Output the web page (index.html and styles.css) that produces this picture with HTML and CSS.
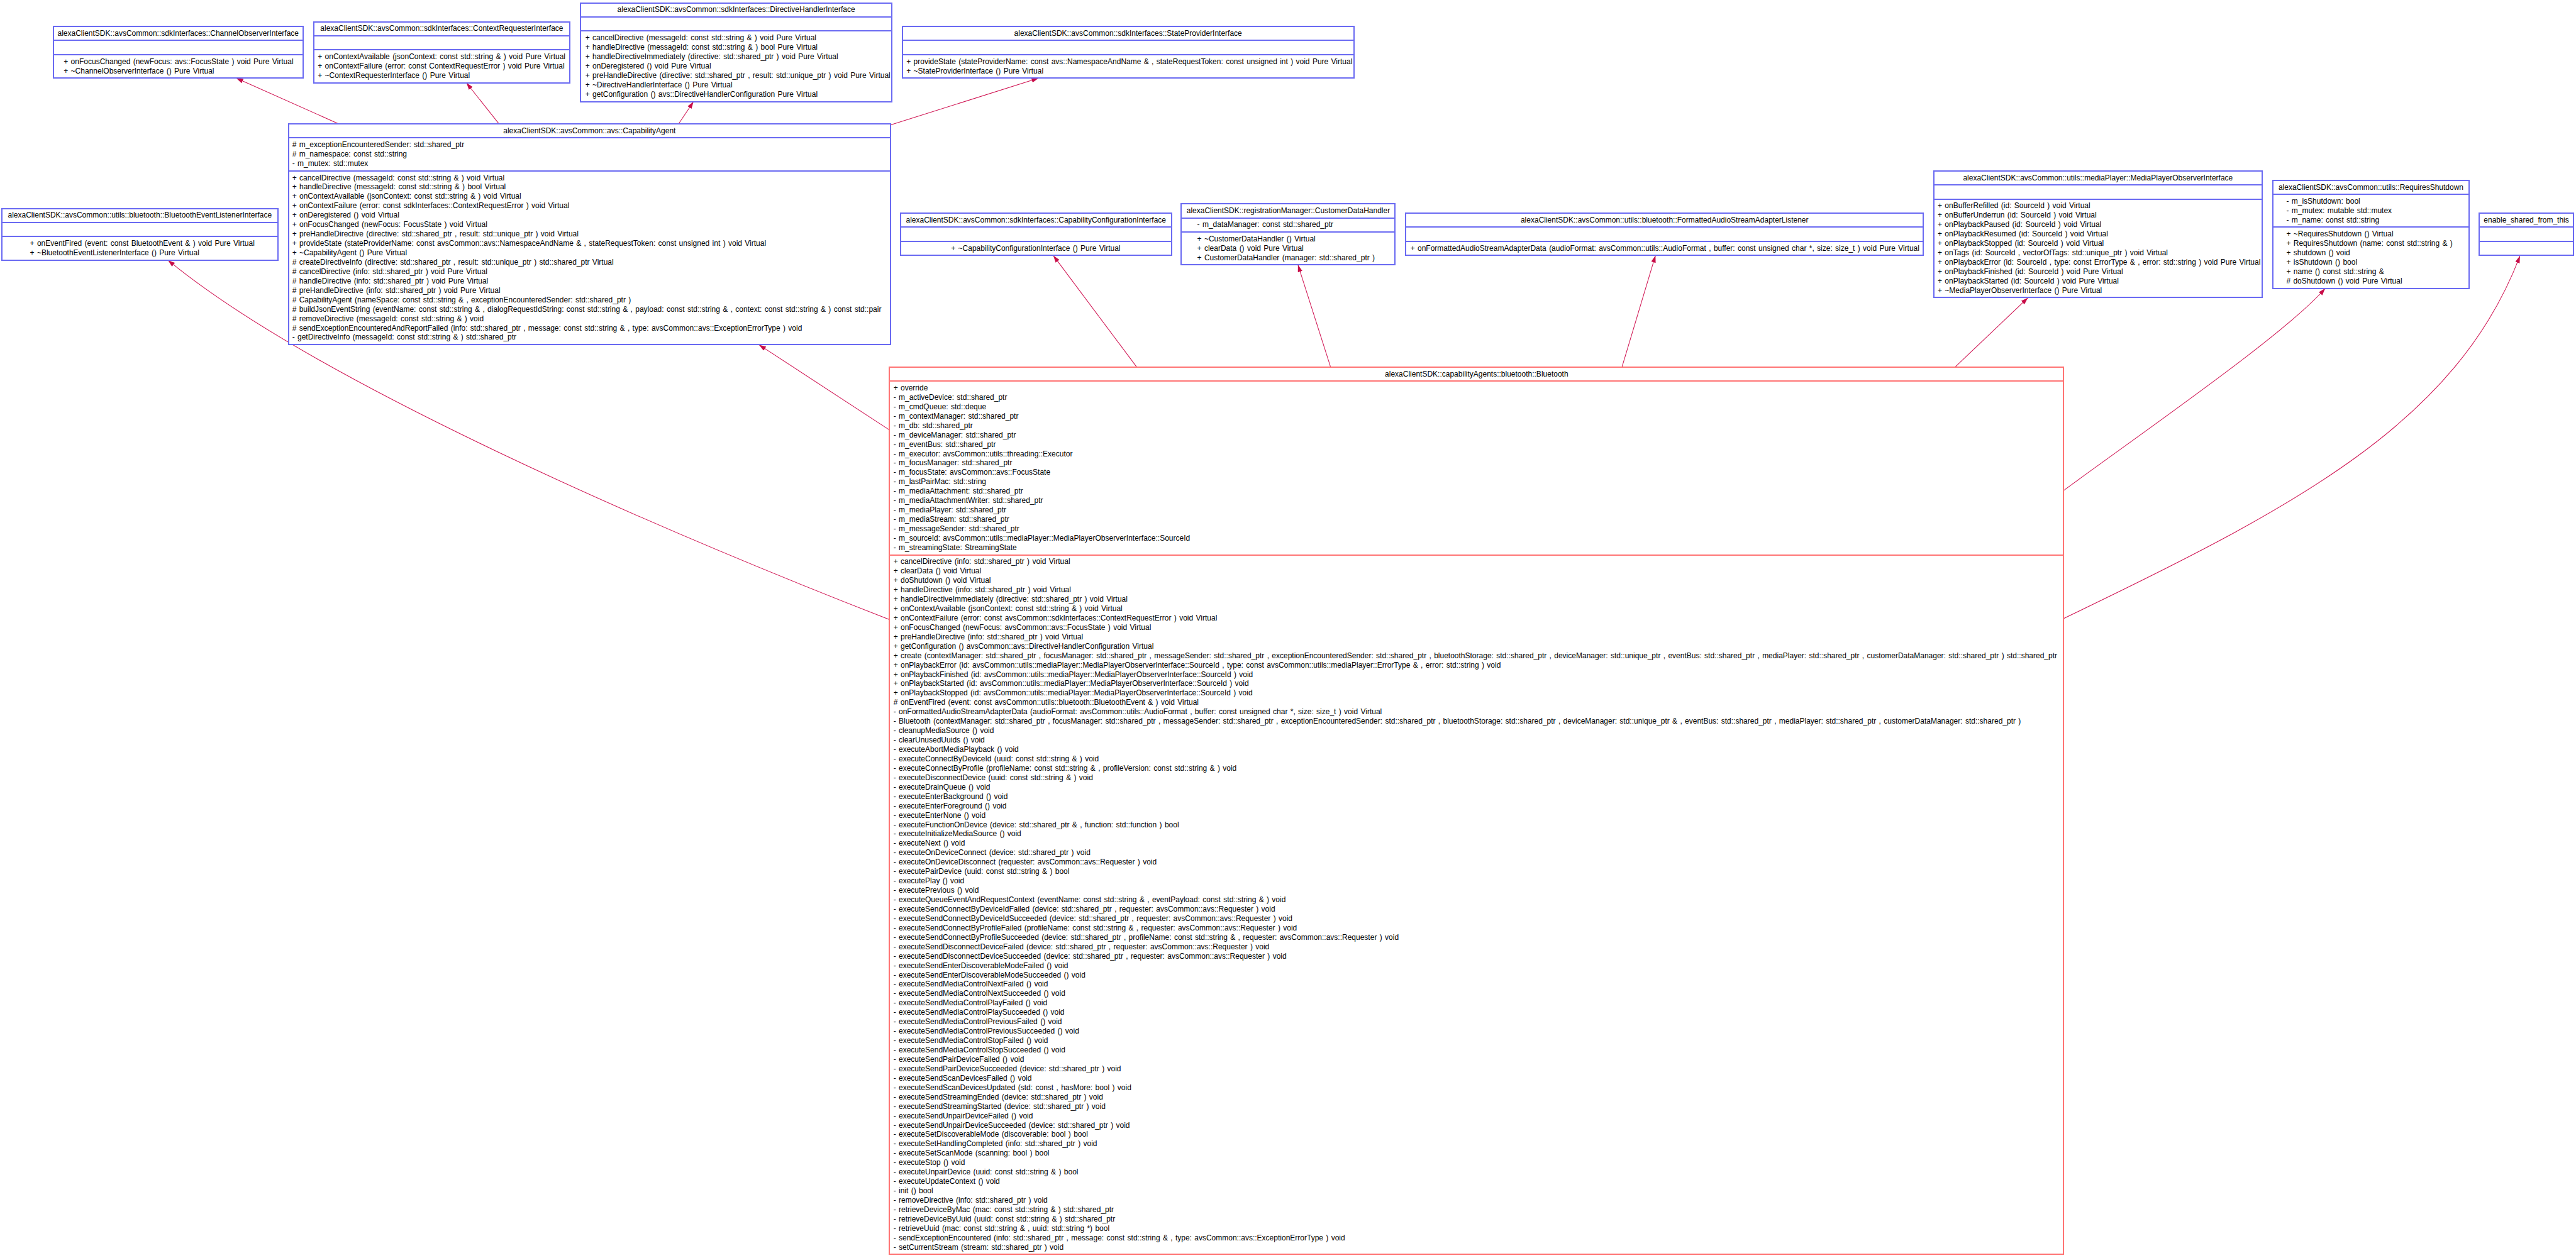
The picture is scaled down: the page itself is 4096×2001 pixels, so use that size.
FILE: index.html
```html
<!DOCTYPE html>
<html lang="en">
<head>
<meta charset="utf-8">
<title>alexaClientSDK::capabilityAgents::bluetooth::Bluetooth class diagram</title>
<link rel="stylesheet" href="styles.css">
</head>
<body>
<main class="canvas">
<svg class="edges" viewBox="0 0 4385 2142" aria-hidden="true">
<defs><marker id="head" markerUnits="userSpaceOnUse" markerWidth="13" markerHeight="9" refX="12" refY="4.5" orient="auto"><path class="head" d="M0 .5L12 4.5L0 8.5z"/></marker></defs>
<path class="edge" d="M577 211L402 133"/>
<path class="edge" d="M849.5 211L794 141"/>
<path class="edge" d="M1155 211L1180.5 173"/>
<path class="edge" d="M1515 213L1768 133"/>
<path class="edge" d="M1514 1055C1114 899 536 649 286 443"/>
<path class="edge" d="M1514 732L1292 587"/>
<path class="edge" d="M1935 625L1793 435"/>
<path class="edge" d="M2265 625L2209.5 451"/>
<path class="edge" d="M2761 625L2818 435"/>
<path class="edge" d="M3328 625L3452 507"/>
<path class="edge" d="M3513 835C3663 725 3892 567 3958 491"/>
<path class="edge" d="M3513 1053C3913 861 4182 718 4289.6 435.7"/>
</svg>

<section class="node n-channel">
<div class="sec title">alexaClientSDK::avsCommon::sdkInterfaces::ChannelObserverInterface</div>
<div class="sec"></div>
<div class="sec"><p>+ onFocusChanged (newFocus: avs::FocusState ) void Pure Virtual</p><p>+ ~ChannelObserverInterface () Pure Virtual</p></div>
</section>

<section class="node n-context">
<div class="sec title">alexaClientSDK::avsCommon::sdkInterfaces::ContextRequesterInterface</div>
<div class="sec"></div>
<div class="sec"><p>+ onContextAvailable (jsonContext: const std::string &amp; ) void Pure Virtual</p><p>+ onContextFailure (error: const ContextRequestError ) void Pure Virtual</p><p>+ ~ContextRequesterInterface () Pure Virtual</p></div>
</section>

<section class="node n-directive">
<div class="sec title">alexaClientSDK::avsCommon::sdkInterfaces::DirectiveHandlerInterface</div>
<div class="sec"></div>
<div class="sec"><p>+ cancelDirective (messageId: const std::string &amp; ) void Pure Virtual</p><p>+ handleDirective (messageId: const std::string &amp; ) bool Pure Virtual</p><p>+ handleDirectiveImmediately (directive: std::shared_ptr ) void Pure Virtual</p><p>+ onDeregistered () void Pure Virtual</p><p>+ preHandleDirective (directive: std::shared_ptr , result: std::unique_ptr ) void Pure Virtual</p><p>+ ~DirectiveHandlerInterface () Pure Virtual</p><p>+ getConfiguration () avs::DirectiveHandlerConfiguration Pure Virtual</p></div>
</section>

<section class="node n-state">
<div class="sec title">alexaClientSDK::avsCommon::sdkInterfaces::StateProviderInterface</div>
<div class="sec"></div>
<div class="sec"><p>+ provideState (stateProviderName: const avs::NamespaceAndName &amp; , stateRequestToken: const unsigned int ) void Pure Virtual</p><p>+ ~StateProviderInterface () Pure Virtual</p></div>
</section>

<section class="node n-listener">
<div class="sec title">alexaClientSDK::avsCommon::utils::bluetooth::BluetoothEventListenerInterface</div>
<div class="sec"></div>
<div class="sec"><p>+ onEventFired (event: const BluetoothEvent &amp; ) void Pure Virtual</p><p>+ ~BluetoothEventListenerInterface () Pure Virtual</p></div>
</section>

<section class="node n-agent">
<div class="sec title">alexaClientSDK::avsCommon::avs::CapabilityAgent</div>
<div class="sec"><p># m_exceptionEncounteredSender: std::shared_ptr</p><p># m_namespace: const std::string</p><p>- m_mutex: std::mutex</p></div>
<div class="sec"><p>+ cancelDirective (messageId: const std::string &amp; ) void Virtual</p><p>+ handleDirective (messageId: const std::string &amp; ) bool Virtual</p><p>+ onContextAvailable (jsonContext: const std::string &amp; ) void Virtual</p><p>+ onContextFailure (error: const sdkInterfaces::ContextRequestError ) void Virtual</p><p>+ onDeregistered () void Virtual</p><p>+ onFocusChanged (newFocus: FocusState ) void Virtual</p><p>+ preHandleDirective (directive: std::shared_ptr , result: std::unique_ptr ) void Virtual</p><p>+ provideState (stateProviderName: const avsCommon::avs::NamespaceAndName &amp; , stateRequestToken: const unsigned int ) void Virtual</p><p>+ ~CapabilityAgent () Pure Virtual</p><p># createDirectiveInfo (directive: std::shared_ptr , result: std::unique_ptr ) std::shared_ptr Virtual</p><p># cancelDirective (info: std::shared_ptr ) void Pure Virtual</p><p># handleDirective (info: std::shared_ptr ) void Pure Virtual</p><p># preHandleDirective (info: std::shared_ptr ) void Pure Virtual</p><p># CapabilityAgent (nameSpace: const std::string &amp; , exceptionEncounteredSender: std::shared_ptr )</p><p># buildJsonEventString (eventName: const std::string &amp; , dialogRequestIdString: const std::string &amp; , payload: const std::string &amp; , context: const std::string &amp; ) const std::pair</p><p># removeDirective (messageId: const std::string &amp; ) void</p><p># sendExceptionEncounteredAndReportFailed (info: std::shared_ptr , message: const std::string &amp; , type: avsCommon::avs::ExceptionErrorType ) void</p><p>- getDirectiveInfo (messageId: const std::string &amp; ) std::shared_ptr</p></div>
</section>

<section class="node n-config">
<div class="sec title">alexaClientSDK::avsCommon::sdkInterfaces::CapabilityConfigurationInterface</div>
<div class="sec"></div>
<div class="sec"><p>+ ~CapabilityConfigurationInterface () Pure Virtual</p></div>
</section>

<section class="node n-customer">
<div class="sec title">alexaClientSDK::registrationManager::CustomerDataHandler</div>
<div class="sec"><p>- m_dataManager: const std::shared_ptr</p></div>
<div class="sec"><p>+ ~CustomerDataHandler () Virtual</p><p>+ clearData () void Pure Virtual</p><p>+ CustomerDataHandler (manager: std::shared_ptr )</p></div>
</section>

<section class="node n-formatted">
<div class="sec title">alexaClientSDK::avsCommon::utils::bluetooth::FormattedAudioStreamAdapterListener</div>
<div class="sec"></div>
<div class="sec"><p>+ onFormattedAudioStreamAdapterData (audioFormat: avsCommon::utils::AudioFormat , buffer: const unsigned char *, size: size_t ) void Pure Virtual</p></div>
</section>

<section class="node n-player">
<div class="sec title">alexaClientSDK::avsCommon::utils::mediaPlayer::MediaPlayerObserverInterface</div>
<div class="sec"></div>
<div class="sec"><p>+ onBufferRefilled (id: SourceId ) void Virtual</p><p>+ onBufferUnderrun (id: SourceId ) void Virtual</p><p>+ onPlaybackPaused (id: SourceId ) void Virtual</p><p>+ onPlaybackResumed (id: SourceId ) void Virtual</p><p>+ onPlaybackStopped (id: SourceId ) void Virtual</p><p>+ onTags (id: SourceId , vectorOfTags: std::unique_ptr ) void Virtual</p><p>+ onPlaybackError (id: SourceId , type: const ErrorType &amp; , error: std::string ) void Pure Virtual</p><p>+ onPlaybackFinished (id: SourceId ) void Pure Virtual</p><p>+ onPlaybackStarted (id: SourceId ) void Pure Virtual</p><p>+ ~MediaPlayerObserverInterface () Pure Virtual</p></div>
</section>

<section class="node n-shutdown">
<div class="sec title">alexaClientSDK::avsCommon::utils::RequiresShutdown</div>
<div class="sec"><p>- m_isShutdown: bool</p><p>- m_mutex: mutable std::mutex</p><p>- m_name: const std::string</p></div>
<div class="sec"><p>+ ~RequiresShutdown () Virtual</p><p>+ RequiresShutdown (name: const std::string &amp; )</p><p>+ shutdown () void</p><p>+ isShutdown () bool</p><p>+ name () const std::string &amp;</p><p># doShutdown () void Pure Virtual</p></div>
</section>

<section class="node n-enable">
<div class="sec title">enable_shared_from_this</div>
<div class="sec"></div>
<div class="sec"></div>
</section>

<section class="node n-bluetooth">
<div class="sec title">alexaClientSDK::capabilityAgents::bluetooth::Bluetooth</div>
<div class="sec"><p>+ override</p><p>- m_activeDevice: std::shared_ptr</p><p>- m_cmdQueue: std::deque</p><p>- m_contextManager: std::shared_ptr</p><p>- m_db: std::shared_ptr</p><p>- m_deviceManager: std::shared_ptr</p><p>- m_eventBus: std::shared_ptr</p><p>- m_executor: avsCommon::utils::threading::Executor</p><p>- m_focusManager: std::shared_ptr</p><p>- m_focusState: avsCommon::avs::FocusState</p><p>- m_lastPairMac: std::string</p><p>- m_mediaAttachment: std::shared_ptr</p><p>- m_mediaAttachmentWriter: std::shared_ptr</p><p>- m_mediaPlayer: std::shared_ptr</p><p>- m_mediaStream: std::shared_ptr</p><p>- m_messageSender: std::shared_ptr</p><p>- m_sourceId: avsCommon::utils::mediaPlayer::MediaPlayerObserverInterface::SourceId</p><p>- m_streamingState: StreamingState</p></div>
<div class="sec">
<p>+ cancelDirective (info: std::shared_ptr ) void Virtual</p>
<p>+ clearData () void Virtual</p>
<p>+ doShutdown () void Virtual</p>
<p>+ handleDirective (info: std::shared_ptr ) void Virtual</p>
<p>+ handleDirectiveImmediately (directive: std::shared_ptr ) void Virtual</p>
<p>+ onContextAvailable (jsonContext: const std::string &amp; ) void Virtual</p>
<p>+ onContextFailure (error: const avsCommon::sdkInterfaces::ContextRequestError ) void Virtual</p>
<p>+ onFocusChanged (newFocus: avsCommon::avs::FocusState ) void Virtual</p>
<p>+ preHandleDirective (info: std::shared_ptr ) void Virtual</p>
<p>+ getConfiguration () avsCommon::avs::DirectiveHandlerConfiguration Virtual</p>
<p>+ create (contextManager: std::shared_ptr , focusManager: std::shared_ptr , messageSender: std::shared_ptr , exceptionEncounteredSender: std::shared_ptr , bluetoothStorage: std::shared_ptr , deviceManager: std::unique_ptr , eventBus: std::shared_ptr , mediaPlayer: std::shared_ptr , customerDataManager: std::shared_ptr ) std::shared_ptr</p>
<p>+ onPlaybackError (id: avsCommon::utils::mediaPlayer::MediaPlayerObserverInterface::SourceId , type: const avsCommon::utils::mediaPlayer::ErrorType &amp; , error: std::string ) void</p>
<p>+ onPlaybackFinished (id: avsCommon::utils::mediaPlayer::MediaPlayerObserverInterface::SourceId ) void</p>
<p>+ onPlaybackStarted (id: avsCommon::utils::mediaPlayer::MediaPlayerObserverInterface::SourceId ) void</p>
<p>+ onPlaybackStopped (id: avsCommon::utils::mediaPlayer::MediaPlayerObserverInterface::SourceId ) void</p>
<p># onEventFired (event: const avsCommon::utils::bluetooth::BluetoothEvent &amp; ) void Virtual</p>
<p>- onFormattedAudioStreamAdapterData (audioFormat: avsCommon::utils::AudioFormat , buffer: const unsigned char *, size: size_t ) void Virtual</p>
<p>- Bluetooth (contextManager: std::shared_ptr , focusManager: std::shared_ptr , messageSender: std::shared_ptr , exceptionEncounteredSender: std::shared_ptr , bluetoothStorage: std::shared_ptr , deviceManager: std::unique_ptr &amp; , eventBus: std::shared_ptr , mediaPlayer: std::shared_ptr , customerDataManager: std::shared_ptr )</p>
<p>- cleanupMediaSource () void</p>
<p>- clearUnusedUuids () void</p>
<p>- executeAbortMediaPlayback () void</p>
<p>- executeConnectByDeviceId (uuid: const std::string &amp; ) void</p>
<p>- executeConnectByProfile (profileName: const std::string &amp; , profileVersion: const std::string &amp; ) void</p>
<p>- executeDisconnectDevice (uuid: const std::string &amp; ) void</p>
<p>- executeDrainQueue () void</p>
<p>- executeEnterBackground () void</p>
<p>- executeEnterForeground () void</p>
<p>- executeEnterNone () void</p>
<p>- executeFunctionOnDevice (device: std::shared_ptr &amp; , function: std::function ) bool</p>
<p>- executeInitializeMediaSource () void</p>
<p>- executeNext () void</p>
<p>- executeOnDeviceConnect (device: std::shared_ptr ) void</p>
<p>- executeOnDeviceDisconnect (requester: avsCommon::avs::Requester ) void</p>
<p>- executePairDevice (uuid: const std::string &amp; ) bool</p>
<p>- executePlay () void</p>
<p>- executePrevious () void</p>
<p>- executeQueueEventAndRequestContext (eventName: const std::string &amp; , eventPayload: const std::string &amp; ) void</p>
<p>- executeSendConnectByDeviceIdFailed (device: std::shared_ptr , requester: avsCommon::avs::Requester ) void</p>
<p>- executeSendConnectByDeviceIdSucceeded (device: std::shared_ptr , requester: avsCommon::avs::Requester ) void</p>
<p>- executeSendConnectByProfileFailed (profileName: const std::string &amp; , requester: avsCommon::avs::Requester ) void</p>
<p>- executeSendConnectByProfileSucceeded (device: std::shared_ptr , profileName: const std::string &amp; , requester: avsCommon::avs::Requester ) void</p>
<p>- executeSendDisconnectDeviceFailed (device: std::shared_ptr , requester: avsCommon::avs::Requester ) void</p>
<p>- executeSendDisconnectDeviceSucceeded (device: std::shared_ptr , requester: avsCommon::avs::Requester ) void</p>
<p>- executeSendEnterDiscoverableModeFailed () void</p>
<p>- executeSendEnterDiscoverableModeSucceeded () void</p>
<p>- executeSendMediaControlNextFailed () void</p>
<p>- executeSendMediaControlNextSucceeded () void</p>
<p>- executeSendMediaControlPlayFailed () void</p>
<p>- executeSendMediaControlPlaySucceeded () void</p>
<p>- executeSendMediaControlPreviousFailed () void</p>
<p>- executeSendMediaControlPreviousSucceeded () void</p>
<p>- executeSendMediaControlStopFailed () void</p>
<p>- executeSendMediaControlStopSucceeded () void</p>
<p>- executeSendPairDeviceFailed () void</p>
<p>- executeSendPairDeviceSucceeded (device: std::shared_ptr ) void</p>
<p>- executeSendScanDevicesFailed () void</p>
<p>- executeSendScanDevicesUpdated (std: const , hasMore: bool ) void</p>
<p>- executeSendStreamingEnded (device: std::shared_ptr ) void</p>
<p>- executeSendStreamingStarted (device: std::shared_ptr ) void</p>
<p>- executeSendUnpairDeviceFailed () void</p>
<p>- executeSendUnpairDeviceSucceeded (device: std::shared_ptr ) void</p>
<p>- executeSetDiscoverableMode (discoverable: bool ) bool</p>
<p>- executeSetHandlingCompleted (info: std::shared_ptr ) void</p>
<p>- executeSetScanMode (scanning: bool ) bool</p>
<p>- executeStop () void</p>
<p>- executeUnpairDevice (uuid: const std::string &amp; ) bool</p>
<p>- executeUpdateContext () void</p>
<p>- init () bool</p>
<p>- removeDirective (info: std::shared_ptr ) void</p>
<p>- retrieveDeviceByMac (mac: const std::string &amp; ) std::shared_ptr</p>
<p>- retrieveDeviceByUuid (uuid: const std::string &amp; ) std::shared_ptr</p>
<p>- retrieveUuid (mac: const std::string &amp; , uuid: std::string *) bool</p>
<p>- sendExceptionEncountered (info: std::shared_ptr , message: const std::string &amp; , type: avsCommon::avs::ExceptionErrorType ) void</p>
<p>- setCurrentStream (stream: std::shared_ptr ) void</p>
</div>
</section>
</main>
</body>
</html>
```

FILE: styles.css
```css
:root {
  --s: 0.93409;
  --blue: #6a6af2;
  --red: #ff7474;
  --edge: #cf1150;
}

* { box-sizing: border-box; }

html, body {
  margin: 0;
  height: 100%;
  background: #fff;
  overflow: hidden;
}

.canvas {
  position: relative;
  width: 100vw;
  height: 100vh;
  font: 12px/14.945px "Liberation Sans", Arial, sans-serif;
  word-spacing: 1px;
  color: #000;
}

.edges {
  position: absolute;
  inset: 0;
  width: 100%;
  height: 100%;
}

.edge {
  fill: none;
  stroke: var(--edge);
  stroke-width: 1.1;
  marker-end: url(#head);
}

.head { fill: #c80c48; }

/* Diagram nodes: --x, --y, --w and --in are reference pixels. */
.node {
  --line: var(--blue);
  position: absolute;
  left: calc(var(--x) * var(--s) * 1px - 1px);
  top: calc(var(--y) * var(--s) * 1px - 1px);
  width: calc(var(--w) * var(--s) * 1px + 2px);
  display: flex;
  flex-direction: column;
  background: #fff;
  border: solid var(--line);
  border-width: 0 2px 2px;
}

.sec {
  min-height: 22.418px;
  padding: 2.736px 0 2.736px calc(var(--in) * var(--s) * 1px - 2px);
  border-top: 2px solid var(--line);
}

.sec p {
  margin: 0;
  white-space: nowrap;
}

.title {
  padding-left: 0;
  text-align: center;
  white-space: nowrap;
}

.n-channel   { --x: 90.5;  --y: 45;  --w: 425.5; --in: 19; }
.n-context   { --x: 534;   --y: 37;  --w: 436;   --in: 8; }
.n-directive { --x: 988.5; --y: 5;   --w: 529.5; --in: 9; }
.n-state     { --x: 1536;  --y: 45;  --w: 768.5; --in: 8; }
.n-listener  { --x: 3;     --y: 355; --w: 470;   --in: 49; }
.n-agent     { --x: 491.5; --y: 211; --w: 1024;  --in: 7; }
.n-config    { --x: 1533;  --y: 363; --w: 461;   --in: 87; }
.n-customer  { --x: 2011;  --y: 347; --w: 364;   --in: 28; }
.n-formatted { --x: 2393;  --y: 363; --w: 881;   --in: 9; }
.n-player    { --x: 3291.5; --y: 291; --w: 559.5; --in: 8; }
.n-shutdown  { --x: 3869;  --y: 307; --w: 334;   --in: 24; }
.n-enable    { --x: 4220.5; --y: 363; --w: 160;  --in: 8; }
.n-bluetooth { --x: 1514;  --y: 625; --w: 1999;  --in: 8; --line: var(--red); }
```
